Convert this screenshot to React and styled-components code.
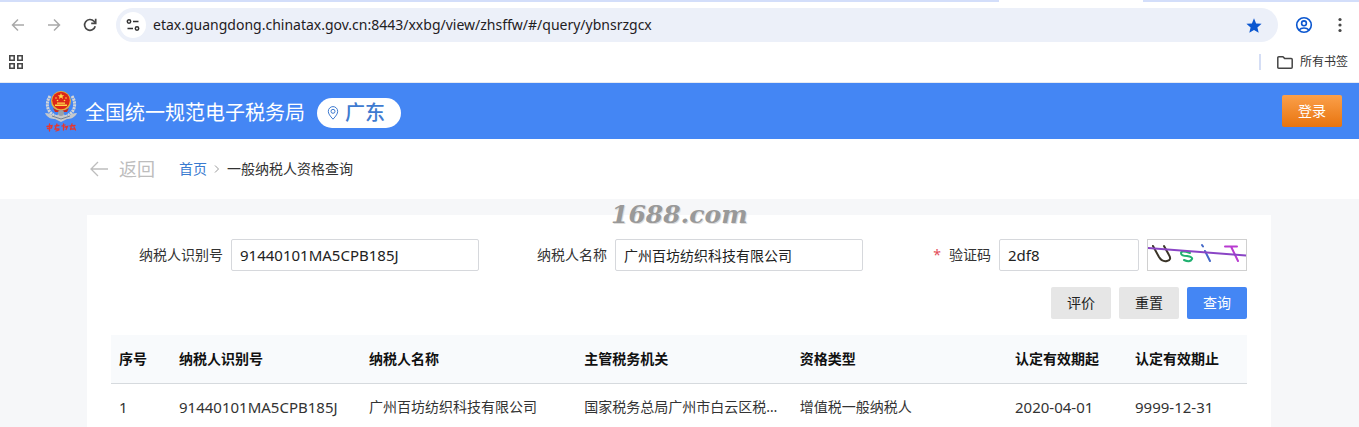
import React, { useState } from 'react';
import styled, { createGlobalStyle, css } from 'styled-components';

const GlobalStyle = createGlobalStyle`
  * {
    box-sizing: border-box;
  }

  body {
    margin: 0;
    background: #f6f7f9;
    color: #333;
    font-family: 'Noto Sans', 'Noto Sans CJK SC', sans-serif;
    font-size: 14px;
    line-height: 20px;
  }

  button,
  input {
    font-family: inherit;
    font-size: 14px;
    line-height: 20px;
  }

  a {
    text-decoration: none;
  }
`;

const Page = styled.div`
  overflow: hidden;
  height: 100vh;
`;

/* Browser chrome */

const TabStrip = styled.div`
  display: flex;
  height: 2px;
  background: #d3defa;
`;

const ActiveTab = styled.div`
  width: 144px;
  margin-left: auto;
  margin-right: 216px;
  background: #fff;
`;

const Toolbar = styled.div`
  display: flex;
  align-items: center;
  height: 46px;
  padding: 0 9px 0 8px;
  background: #fff;
`;

const IconButton = styled.button`
  display: flex;
  align-items: center;
  justify-content: center;
  width: 20px;
  height: 32px;
  padding: 0;
  border: 0;
  background: none;
  color: ${({ $color }) => $color || '#474747'};

  & + & {
    margin-left: 16px;
  }
`;

const AddressBar = styled.div`
  display: flex;
  align-items: center;
  flex: 1;
  height: 34px;
  margin: 0 16px;
  padding: 0 16px 0 4px;
  border-radius: 17px;
  background: #ecf0f9;
`;

const SiteInfo = styled.button`
  display: flex;
  align-items: center;
  justify-content: center;
  width: 26px;
  height: 26px;
  padding: 0;
  border: 0;
  border-radius: 50%;
  background: #fff;
`;

const AddressInput = styled.input`
  flex: 1;
  min-width: 0;
  margin-left: 7px;
  padding: 0;
  border: 0;
  outline: 0;
  background: none;
  color: #1f2023;
`;

const BookmarksBar = styled.div`
  display: flex;
  align-items: center;
  height: 35px;
  padding: 0 11px 6px 6px;
  border-bottom: 1px solid #e6eaf2;
  background: #fff;
`;

const AllBookmarks = styled.button`
  display: flex;
  align-items: center;
  gap: 7px;
  height: 16px;
  margin-left: auto;
  padding: 0 0 0 16px;
  border: 0;
  border-left: 2px solid #d5def5;
  background: none;
  color: #333;
  font-size: 12px;
`;

/* Site header */

const Header = styled.header`
  display: flex;
  align-items: center;
  height: 56px;
  padding: 0 17px 0 44px;
  background: #4486f4;
`;

const Brand = styled.div`
  display: flex;
  align-items: center;
  gap: 12px;
  padding: 3px 0 0 7px;
`;

const SiteName = styled.h1`
  margin: 0;
  color: #fff;
  font-size: 20px;
  font-weight: 400;
  line-height: 28px;
`;

const Region = styled.button`
  display: flex;
  align-items: center;
  gap: 6px;
  height: 30px;
  padding: 0 16px 0 10px;
  border: 0;
  border-radius: 15px;
  background: #fff;
  color: #3f7bd0;
  font-size: 20px;
  font-weight: 500;
`;

const LoginButton = styled.button`
  width: 60px;
  height: 32px;
  margin-left: auto;
  padding: 0;
  border: 0;
  border-radius: 2px;
  background: linear-gradient(#fba04a, #e8740f);
  color: #fff;
`;

const Breadcrumb = styled.nav`
  display: flex;
  align-items: center;
  height: 60px;
  padding: 0 90px;
  background: #fff;
`;

const BackLink = styled.a`
  display: flex;
  align-items: center;
  gap: 11px;
  margin-right: 24px;
  color: #bdbdbd;
  font-size: 18px;
`;

const HomeLink = styled.a`
  color: #3a7bd0;
`;

const Separator = styled.svg`
  margin: 0 7px 0 6px;
`;

/* Query panel */

const Panel = styled.main`
  position: relative;
  min-height: 240px;
  margin: 16px 88px 0 87px;
  padding: 24px;
  background: #fff;
`;

const Watermark = styled.div`
  position: absolute;
  top: -16px;
  left: 50%;
  margin-left: -68px;
  color: #999;
  font-family: 'DejaVu Serif', serif;
  font-size: 25px;
  font-style: italic;
  font-weight: 700;
  line-height: 32px;
  text-shadow: 1px 1px 0 #ddd;
  pointer-events: none;
`;

const QueryForm = styled.form`
  display: grid;
  grid-template-columns: 368px 384px 384px;
  justify-content: space-between;
  row-gap: 16px;
`;

const Field = styled.div`
  display: flex;
  align-items: center;
  justify-content: flex-end;
  gap: 8px;
`;

const Label = styled.label`
  color: #333;

  ${({ $required }) =>
    $required &&
    css`
      &::before {
        content: '*';
        margin-right: 8px;
        color: #e34d59;
      }
    `}
`;

const TextInput = styled.input`
  width: ${({ $short }) => ($short ? '140px' : '248px')};
  height: 32px;
  padding: 0 8px;
  border: 1px solid #d6d8dc;
  border-radius: 2px;
  outline: 0;
  background: #fff;
  color: #222;
  font-size: ${({ $numeric }) => ($numeric ? '15px' : '14px')};
`;

const Captcha = styled.svg`
  border: 1px solid #d0d0d0;
`;

const Actions = styled.div`
  display: flex;
  grid-column: 1 / -1;
  justify-content: flex-end;
  gap: 8px;
`;

const Button = styled.button`
  width: 60px;
  height: 32px;
  padding: 0;
  border: 0;
  border-radius: 2px;
  background: ${({ $primary }) => ($primary ? '#4486f4' : '#e6e6e6')};
  color: ${({ $primary }) => ($primary ? '#fff' : '#222')};
`;

const Table = styled.table`
  width: 100%;
  margin-top: 16px;
  border-collapse: collapse;
  table-layout: fixed;
`;

const HeadCell = styled.th`
  width: ${({ $width }) => $width};
  height: 48px;
  padding: 0 8px;
  border-bottom: 1px solid #d6dade;
  background: #f8fafc;
  color: #111;
  font-weight: 700;
  text-align: left;
`;

const Cell = styled.td`
  height: 48px;
  overflow: hidden;
  padding: 0 8px;
  color: #333;
  font-size: ${({ $numeric }) => ($numeric ? '15px' : '14px')};
  text-overflow: ellipsis;
  white-space: nowrap;
`;

const columns = [
  { key: 'index', title: '序号', width: '60px', numeric: true },
  { key: 'taxpayerId', title: '纳税人识别号', width: '190px', numeric: true },
  { key: 'taxpayerName', title: '纳税人名称' },
  { key: 'authority', title: '主管税务机关' },
  { key: 'type', title: '资格类型' },
  { key: 'validFrom', title: '认定有效期起', width: '120px', numeric: true },
  { key: 'validTo', title: '认定有效期止', width: '120px', numeric: true }
];

const records = [
  {
    index: 1,
    taxpayerId: '91440101MA5CPB185J',
    taxpayerName: '广州百坊纺织科技有限公司',
    authority: '国家税务总局广州市白云区税务局',
    type: '增值税一般纳税人',
    validFrom: '2020-04-01',
    validTo: '9999-12-31'
  }
];

const ArrowIcon = ({ flip }) => (
  <svg width="14" height="14" viewBox="0 0 14 14" fill="none" stroke="currentColor" strokeWidth="1.5">
    <path d={flip ? 'M1 7h11.500M7 1.500L12.500 7L7 12.500' : 'M13 7H1.500M7 1.500L1.500 7L7 12.500'} />
  </svg>
);

const ReloadIcon = () => (
  <svg width="14" height="14" viewBox="0 0 14 14" fill="none" stroke="currentColor" strokeWidth="1.7">
    <path d="M12.200 8.200A5.400 5.400 0 1 1 11 3.300L12.500 5" />
    <path d="M12.700 0.800V5.300H8.200" />
  </svg>
);

const TuneIcon = () => (
  <svg width="14" height="12" viewBox="0 0 14 12" fill="none" stroke="#333" strokeWidth="1.5">
    <circle cx="3" cy="2.500" r="1.700" />
    <path d="M7 2.500h5.500M1.500 9.500H7" />
    <circle cx="11" cy="9.500" r="1.700" />
  </svg>
);

const StarIcon = () => (
  <svg width="16" height="15" viewBox="0 0 16 15" fill="#0b57d0">
    <path d="M8 0.300L10.100 5.400L15.600 5.800L11.400 9.400L12.700 14.800L8 11.900L3.300 14.800L4.600 9.400L0.400 5.800L5.900 5.400Z" />
  </svg>
);

const ProfileIcon = () => (
  <svg width="18" height="18" viewBox="0 0 18 18" fill="none" stroke="currentColor" strokeWidth="1.6">
    <circle cx="9" cy="9" r="7.300" />
    <circle cx="9" cy="7.300" r="2.400" />
    <path d="M4 14C5.400 12.500 7 12 9 12S12.600 12.500 14 14" />
  </svg>
);

const MoreIcon = () => (
  <svg width="4" height="16" viewBox="0 0 4 16" fill="currentColor">
    <circle cx="2" cy="2.500" r="1.600" />
    <circle cx="2" cy="8" r="1.600" />
    <circle cx="2" cy="13.500" r="1.600" />
  </svg>
);

const AppsIcon = () => (
  <svg width="14" height="14" viewBox="0 0 14 14" fill="none" stroke="currentColor" strokeWidth="1.6">
    <path d="M0.800 0.800h4.400v4.400H0.800ZM8.800 0.800h4.400v4.400H8.800ZM0.800 8.800h4.400v4.400H0.800ZM8.800 8.800h4.400v4.400H8.800Z" />
  </svg>
);

const FolderIcon = () => (
  <svg width="16" height="13" viewBox="0 0 16 13" fill="none" stroke="#444" strokeWidth="1.5" strokeLinejoin="round">
    <path d="M0.800 1.800Q0.800 0.800 1.800 0.800H6L7.800 2.600H14.200Q15.200 2.600 15.200 3.600V11.200Q15.200 12.200 14.200 12.200H1.800Q0.800 12.200 0.800 11.200Z" />
  </svg>
);

const PinIcon = () => (
  <svg width="12" height="14" viewBox="0 0 12 14" fill="none" stroke="#3f7bd0" strokeWidth="1">
    <path d="M6 13.200C3 10 1.300 7.600 1.300 5.300A4.700 4.700 0 0 1 10.700 5.300C10.700 7.600 9 10 6 13.200Z" />
    <circle cx="6" cy="5.300" r="2" />
  </svg>
);

const Emblem = () => (
  <svg width="34" height="44" viewBox="0 0 34 44">
    <g fill="none" stroke="#d2d5d8" strokeWidth="3" strokeDasharray="2.200 0.700">
      <path d="M6 7C1 15 3 24 13 28" />
      <path d="M28 7C33 15 31 24 21 28" />
    </g>
    <path d="M1 24C5 24 8 26 12 27L17 23L22 27C26 26 29 24 33 24C31 29 26 30 23 30L17 33L11 30C8 30 3 29 1 24Z" fill="#c5c8cc" />
    <path d="M8 27L17 30L26 27" fill="none" stroke="#77818f" strokeWidth="1" />
    <circle cx="17" cy="12" r="10" fill="#e9b13a" />
    <circle cx="17" cy="11.500" r="8.800" fill="#dc2618" />
    <path d="M17 4L17.900 6.300H20.300L18.400 7.700L19.100 10L17 8.600L14.900 10L15.600 7.700L13.700 6.300H16.100Z" fill="#ffd84a" />
    <g fill="#ffd84a">
      <circle cx="12" cy="9" r="0.800" />
      <circle cx="13.500" cy="11.500" r="0.800" />
      <circle cx="22" cy="9" r="0.800" />
      <circle cx="20.500" cy="11.500" r="0.800" />
      <path d="M11 15.500H23V17H11ZM13 13.500H21V14.700H13Z" />
    </g>
    <path d="M9 19Q17 25 25 19L23 23H11Z" fill="#cf2a1b" />
    <circle cx="17" cy="24" r="3" fill="#9aa0a8" />
    <g fill="none" stroke="#e8352c" strokeWidth="1.300" strokeLinecap="round">
      <path d="M3 37.500L8 36.500L7.500 39L3.500 39.500M5.500 35V42" />
      <path d="M11 37L15 36.500M13 35L11 40H15M12 42L15 41" />
      <path d="M18 37L21 36M19.500 35V41M21 38L23.500 37.500L22 40.500" />
      <path d="M26 37L31 36.500M28 35L26.500 40.500M30 38L31.500 41M27 40H30" />
    </g>
  </svg>
);

const CaptchaImage = () => (
  <Captcha width="100" height="32" viewBox="0 0 98 30" role="img" aria-label="验证码">
    <g fill="none" strokeWidth="2" strokeLinecap="round">
      <path d="M5 6L11 17Q14 22 19 21Q24 20 21 15L16 6" stroke="#3a3428" />
      <path d="M42 13Q33 10 33 13Q33 16 39 16Q45 17 44 19Q42 23 36 20" stroke="#20b070" />
      <path d="M54 5L55 6.500M57 11L62 21" stroke="#4468c8" />
      <path d="M77 6.500H89M83 6.500L90 21" stroke="#b83ad0" />
      <path d="M0 8L98 15.500" stroke="#8a45c5" />
    </g>
  </Captcha>
);

const App = () => {
  const [url, setUrl] = useState('etax.guangdong.chinatax.gov.cn:8443/xxbg/view/zhsffw/#/query/ybnsrzgcx');
  const [taxpayerId, setTaxpayerId] = useState('91440101MA5CPB185J');
  const [taxpayerName, setTaxpayerName] = useState('广州百坊纺织科技有限公司');
  const [code, setCode] = useState('2df8');

  const handleReset = () => {
    setTaxpayerId('');
    setTaxpayerName('');
    setCode('');
  };

  return (
    <Page>
      <GlobalStyle />
      <TabStrip>
        <ActiveTab />
      </TabStrip>
      <Toolbar>
        <IconButton $color="#a9a9a9" aria-label="后退"><ArrowIcon /></IconButton>
        <IconButton $color="#a9a9a9" aria-label="前进"><ArrowIcon flip /></IconButton>
        <IconButton aria-label="重新加载"><ReloadIcon /></IconButton>
        <AddressBar>
          <SiteInfo aria-label="网站信息"><TuneIcon /></SiteInfo>
          <AddressInput aria-label="地址" value={url} onChange={e => setUrl(e.target.value)} />
          <StarIcon />
        </AddressBar>
        <IconButton $color="#0b57d0" aria-label="个人资料"><ProfileIcon /></IconButton>
        <IconButton aria-label="更多"><MoreIcon /></IconButton>
      </Toolbar>
      <BookmarksBar>
        <IconButton aria-label="应用"><AppsIcon /></IconButton>
        <AllBookmarks>
          <FolderIcon />
          所有书签
        </AllBookmarks>
      </BookmarksBar>

      <Header>
        <Emblem />
        <Brand>
          <SiteName>全国统一规范电子税务局</SiteName>
          <Region>
            <PinIcon />
            广东
          </Region>
        </Brand>
        <LoginButton>登录</LoginButton>
      </Header>

      <Breadcrumb>
        <BackLink href="#/">
          <svg width="18" height="16" viewBox="0 0 18 16" fill="none" stroke="currentColor" strokeWidth="1.3">
            <path d="M18 8H1M8 1L1 8L8 15" />
          </svg>
          返回
        </BackLink>
        <HomeLink href="#/home">首页</HomeLink>
        <Separator width="7" height="8" viewBox="0 0 7 8" fill="none" stroke="#999">
          <path d="M2 0.500L5.500 4L2 7.500" />
        </Separator>
        <span>一般纳税人资格查询</span>
      </Breadcrumb>

      <Panel>
        <QueryForm onSubmit={e => e.preventDefault()}>
          <Field>
            <Label htmlFor="taxpayerId">纳税人识别号</Label>
            <TextInput id="taxpayerId" $numeric value={taxpayerId} onChange={e => setTaxpayerId(e.target.value)} />
          </Field>
          <Field>
            <Label htmlFor="taxpayerName">纳税人名称</Label>
            <TextInput id="taxpayerName" value={taxpayerName} onChange={e => setTaxpayerName(e.target.value)} />
          </Field>
          <Field>
            <Label htmlFor="code" $required>验证码</Label>
            <TextInput id="code" $short $numeric value={code} onChange={e => setCode(e.target.value)} />
            <CaptchaImage />
          </Field>
          <Actions>
            <Button type="button">评价</Button>
            <Button type="button" onClick={handleReset}>重置</Button>
            <Button type="submit" $primary>查询</Button>
          </Actions>
        </QueryForm>

        <Table>
          <thead>
            <tr>
              {columns.map(column => (
                <HeadCell key={column.key} $width={column.width}>{column.title}</HeadCell>
              ))}
            </tr>
          </thead>
          <tbody>
            {records.map(record => (
              <tr key={record.taxpayerId}>
                {columns.map(column => (
                  <Cell key={column.key} $numeric={column.numeric}>{record[column.key]}</Cell>
                ))}
              </tr>
            ))}
          </tbody>
        </Table>
        <Watermark>1688.com</Watermark>
      </Panel>
    </Page>
  );
};

export default App;
